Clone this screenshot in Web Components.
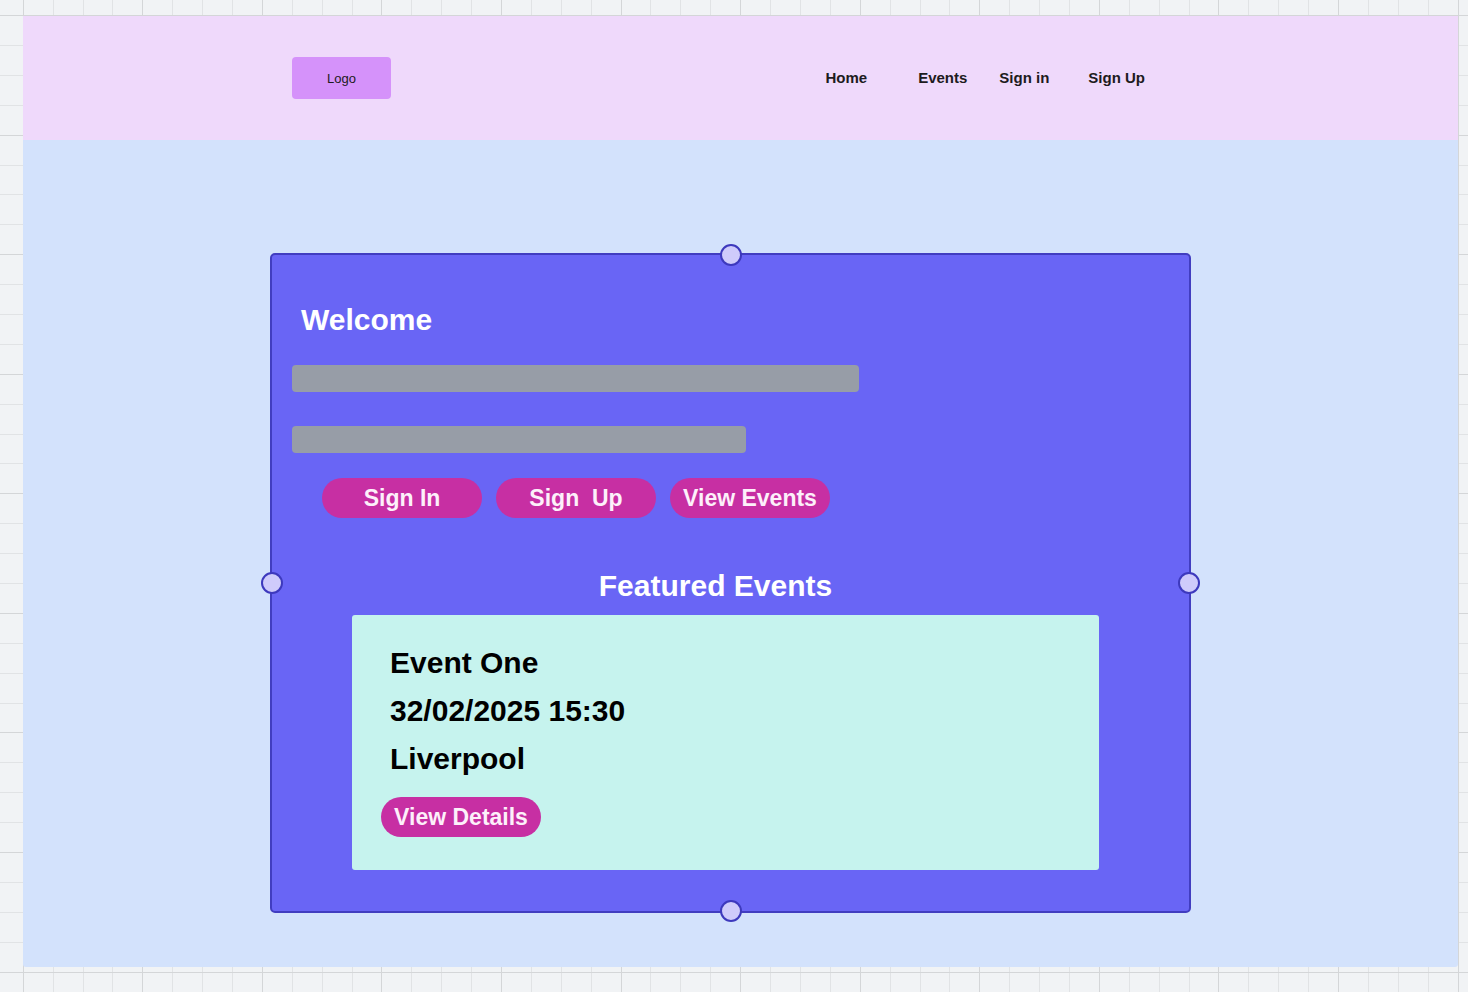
<!DOCTYPE html>
<html lang="en">
<head>
<meta charset="utf-8">
<meta name="viewport" content="width=device-width, initial-scale=1">
<title>Events wireframe</title>
<style>
  body { margin: 0; font-family: "Liberation Sans", Arial, sans-serif; background: #f1f3f5; }
</style>
</head>
<body>
<canvas-board>
  <site-header>
    <nav-link href="#home">Home</nav-link>
    <nav-link href="#events" style="--lead: 51px">Events</nav-link>
    <nav-link href="#signin" style="--lead: 32px">Sign in</nav-link>
    <nav-link href="#signup" style="--lead: 39px">Sign Up</nav-link>
  </site-header>
  <selected-panel>
    <hero-intro heading="Welcome">
      <pill-button>Sign In</pill-button>
      <pill-button>Sign&nbsp; Up</pill-button>
      <pill-button>View Events</pill-button>
    </hero-intro>
    <featured-events heading="Featured Events">
      <event-card>
        <span slot="title">Event One</span>
        <span slot="date">32/02/2025 15:30</span>
        <span slot="place">Liverpool</span>
        <pill-button slot="action">View Details</pill-button>
      </event-card>
    </featured-events>
  </selected-panel>
</canvas-board>

<script>
function define(name, html, Base = HTMLElement) {
  const template = document.createElement('template');
  template.innerHTML = html;
  customElements.define(name, class extends Base {
    constructor() {
      super();
      this.attachShadow({ mode: 'open' }).append(template.content.cloneNode(true));
    }
    connectedCallback() {
      const heading = this.shadowRoot.querySelector('.heading');
      if (heading) heading.textContent = this.getAttribute('heading');
      const link = this.shadowRoot.querySelector('a');
      if (link && this.hasAttribute('href')) link.href = this.getAttribute('href');
      if (super.connectedCallback) super.connectedCallback();
    }
  });
}

/* Ruled paper: a strong line after every four cells. */
class Ruled extends HTMLElement {
  connectedCallback() {
    new ResizeObserver(() => this.draw()).observe(this);
    this.draw();
  }
  draw() {
    const svg = this.shadowRoot.querySelector('svg');
    const w = this.clientWidth, h = this.clientHeight, cell = 29.89;
    const paths = { minor: '', major: '' };
    for (let i = 0; 23.3 + i * cell < w; i++)
      paths[i % 4 ? 'minor' : 'major'] += `M${Math.floor(23.3 + i * cell)} 0h1v${h}h-1z`;
    for (let i = 0; 15.6 + i * cell < h; i++)
      paths[i % 4 ? 'minor' : 'major'] += `M0 ${Math.floor(15.6 + i * cell)}h${w}v1h${-w}z`;
    svg.innerHTML = `<path fill="#e1e3e5" d="${paths.minor}"/><path fill="#d4d6d8" d="${paths.major}"/>`;
  }
}
define('grid-paper', `
  <style>
    :host { display: block; position: absolute; inset: 0; overflow: hidden; }
    svg { display: block; width: 100%; height: 100%; }
  </style>
  <svg aria-hidden="true"></svg>`, Ruled);

define('canvas-board', `
  <style>
    :host { display: flex; position: relative; box-sizing: border-box; min-height: 100vh; padding: 16px 10px 25px 23px; }
    .page { flex: 1; position: relative; display: flex; flex-direction: column; min-width: 0;
      background: #d3e2fc; border-radius: 0 0 3px 3px; }
  </style>
  <grid-paper></grid-paper>
  <div class="page"><slot></slot></div>`);

define('site-header', `
  <style>
    :host { display: block; background: #efd9fb; }
    header { display: flex; align-items: center; justify-content: space-between; height: 124px; padding: 0 313px 0 269px; }
    .logo { display: flex; align-items: center; justify-content: center; width: 99px; height: 42px;
      border-radius: 4px; background: #d592fa; color: #1d1b20; font-size: 13px; text-decoration: none; }
    nav { display: flex; white-space: nowrap; }
  </style>
  <header>
    <a class="logo" href="#home">Logo</a>
    <nav><slot></slot></nav>
  </header>`);

define('nav-link', `
  <style>
    :host { display: block; margin-left: var(--lead, 0); }
    a { color: #1d1b20; font-size: 15px; line-height: 18px; font-weight: bold; text-decoration: none; }
  </style>
  <a><slot></slot></a>`);

define('selected-panel', `
  <style>
    :host { display: block; position: relative; box-sizing: border-box; margin: 113px 267px 54px 247px;
      padding: 47px 20px 41px; border: 2px solid #413dc0; border-radius: 5px; background: #6965f5; }
    i { position: absolute; box-sizing: border-box; width: 22px; height: 22px; margin: -11px;
      border: 2px solid #3d39bd; border-radius: 50%; background: #cfcbfb; }
    .n { left: 50%; top: 0; }
    .s { left: 50%; top: 100%; }
    .w { left: 0; top: 50%; }
    .e { left: 100%; top: 50%; }
  </style>
  <slot></slot>
  <i class="n"></i><i class="e"></i><i class="s"></i><i class="w"></i>`);

define('hero-intro', `
  <style>
    :host { display: block; }
    h1 { margin: 0 0 27px; padding-left: 9px; color: #fff; font-size: 30px; line-height: 36px; }
    .bar { max-width: 100%; height: 27px; border-radius: 4px; background: #979da7; }
    .long { width: 567px; margin-bottom: 34px; }
    .short { width: 454px; }
    .actions { display: flex; gap: 14px; margin-top: 25px; padding-left: 30px; }
  </style>
  <h1 class="heading"></h1>
  <div class="bar long"></div>
  <div class="bar short"></div>
  <div class="actions"><slot></slot></div>`);

define('pill-button', `
  <style>
    :host { display: block; }
    button { display: block; width: 160px; height: 40px; padding: 0; border: 0; border-radius: 20px;
      background: #c72fa3; color: #fdf0fa; font: bold 23px/40px "Liberation Sans", Arial, sans-serif; white-space: nowrap; }
  </style>
  <button type="button"><slot></slot></button>`);

define('featured-events', `
  <style>
    :host { display: block; margin: 50px 70px 0 60px; }
    h2 { margin: 0 0 11px; padding-right: 20px; color: #fff; font-size: 30px; line-height: 36px; text-align: center; }
  </style>
  <h2 class="heading"></h2>
  <slot></slot>`);

define('event-card', `
  <style>
    :host { display: block; }
    article { padding: 30px 29px 33px; border-radius: 3px; background: #c6f3ee; color: #000; }
    h3, p { margin: 0 0 12px; padding-left: 9px; font-size: 30px; line-height: 36px; font-weight: bold; }
    .place { margin-bottom: 20px; }
  </style>
  <article>
    <h3><slot name="title"></slot></h3>
    <p><slot name="date"></slot></p>
    <p class="place"><slot name="place"></slot></p>
    <slot name="action"></slot>
  </article>`);
</script>
</body>
</html>
